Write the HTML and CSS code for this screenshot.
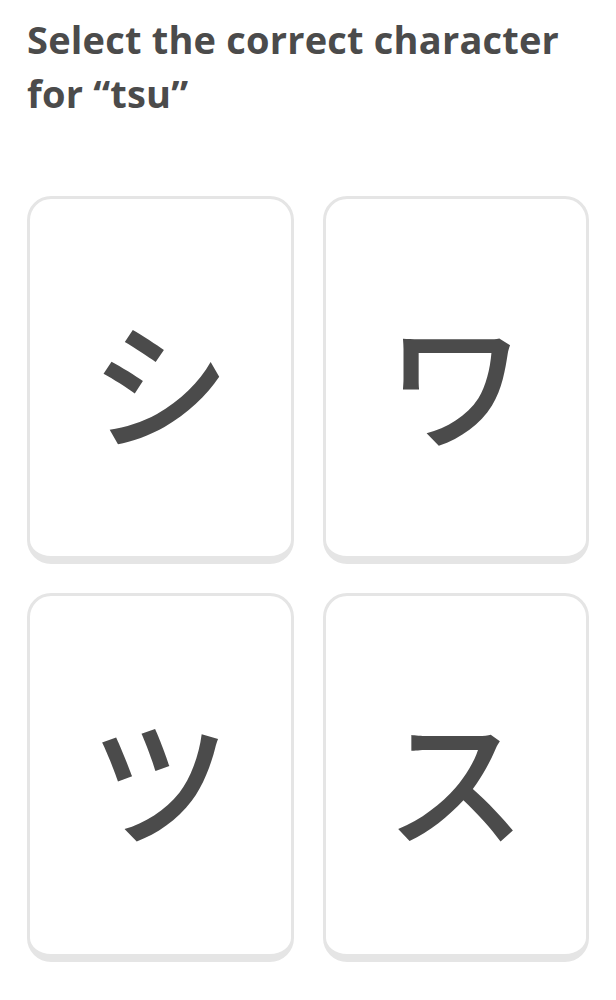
FILE: index.html
```html
<!DOCTYPE html>
<html lang="en">
<head>
<meta charset="utf-8">
<title>Select the correct character</title>
<link rel="stylesheet" href="styles.css">
</head>
<body>
<main class="challenge">
  <h1 class="prompt">Select the correct character for “tsu”</h1>
  <div class="choices">
    <div class="choice"><span class="kana" lang="ja">シ</span></div>
    <div class="choice"><span class="kana" lang="ja">ワ</span></div>
    <div class="choice"><span class="kana" lang="ja">ツ</span></div>
    <div class="choice"><span class="kana" lang="ja">ス</span></div>
  </div>
</main>
</body>
</html>
```
FILE: styles.css
```css
html, body {
  margin: 0;
  padding: 0;
  background: #ffffff;
}

.challenge {
  padding: 0 27px;
  font-family: "Open Sans", "Noto Sans", sans-serif;
  color: #4b4b4b;
}

.prompt {
  margin: 0;
  padding-top: 12px;
  font-size: 38px;
  font-weight: 700;
  line-height: 54px;
  letter-spacing: 0.2px;
  color: #4b4b4b;
}

.choices {
  margin-top: 76px;
  display: grid;
  grid-template-columns: 1fr 1fr;
  grid-template-rows: 368px 369px;
  column-gap: 29px;
  row-gap: 29px;
}

.choice {
  box-sizing: border-box;
  border: 3px solid #e5e5e5;
  border-bottom-width: 8px;
  border-radius: 24px;
  background: #ffffff;
  display: flex;
  align-items: center;
  justify-content: center;
}

.kana {
  font-family: "Noto Sans CJK JP", sans-serif;
  font-size: 140px;
  font-weight: 500;
  line-height: 1;
  color: #4b4b4b;
}
```
